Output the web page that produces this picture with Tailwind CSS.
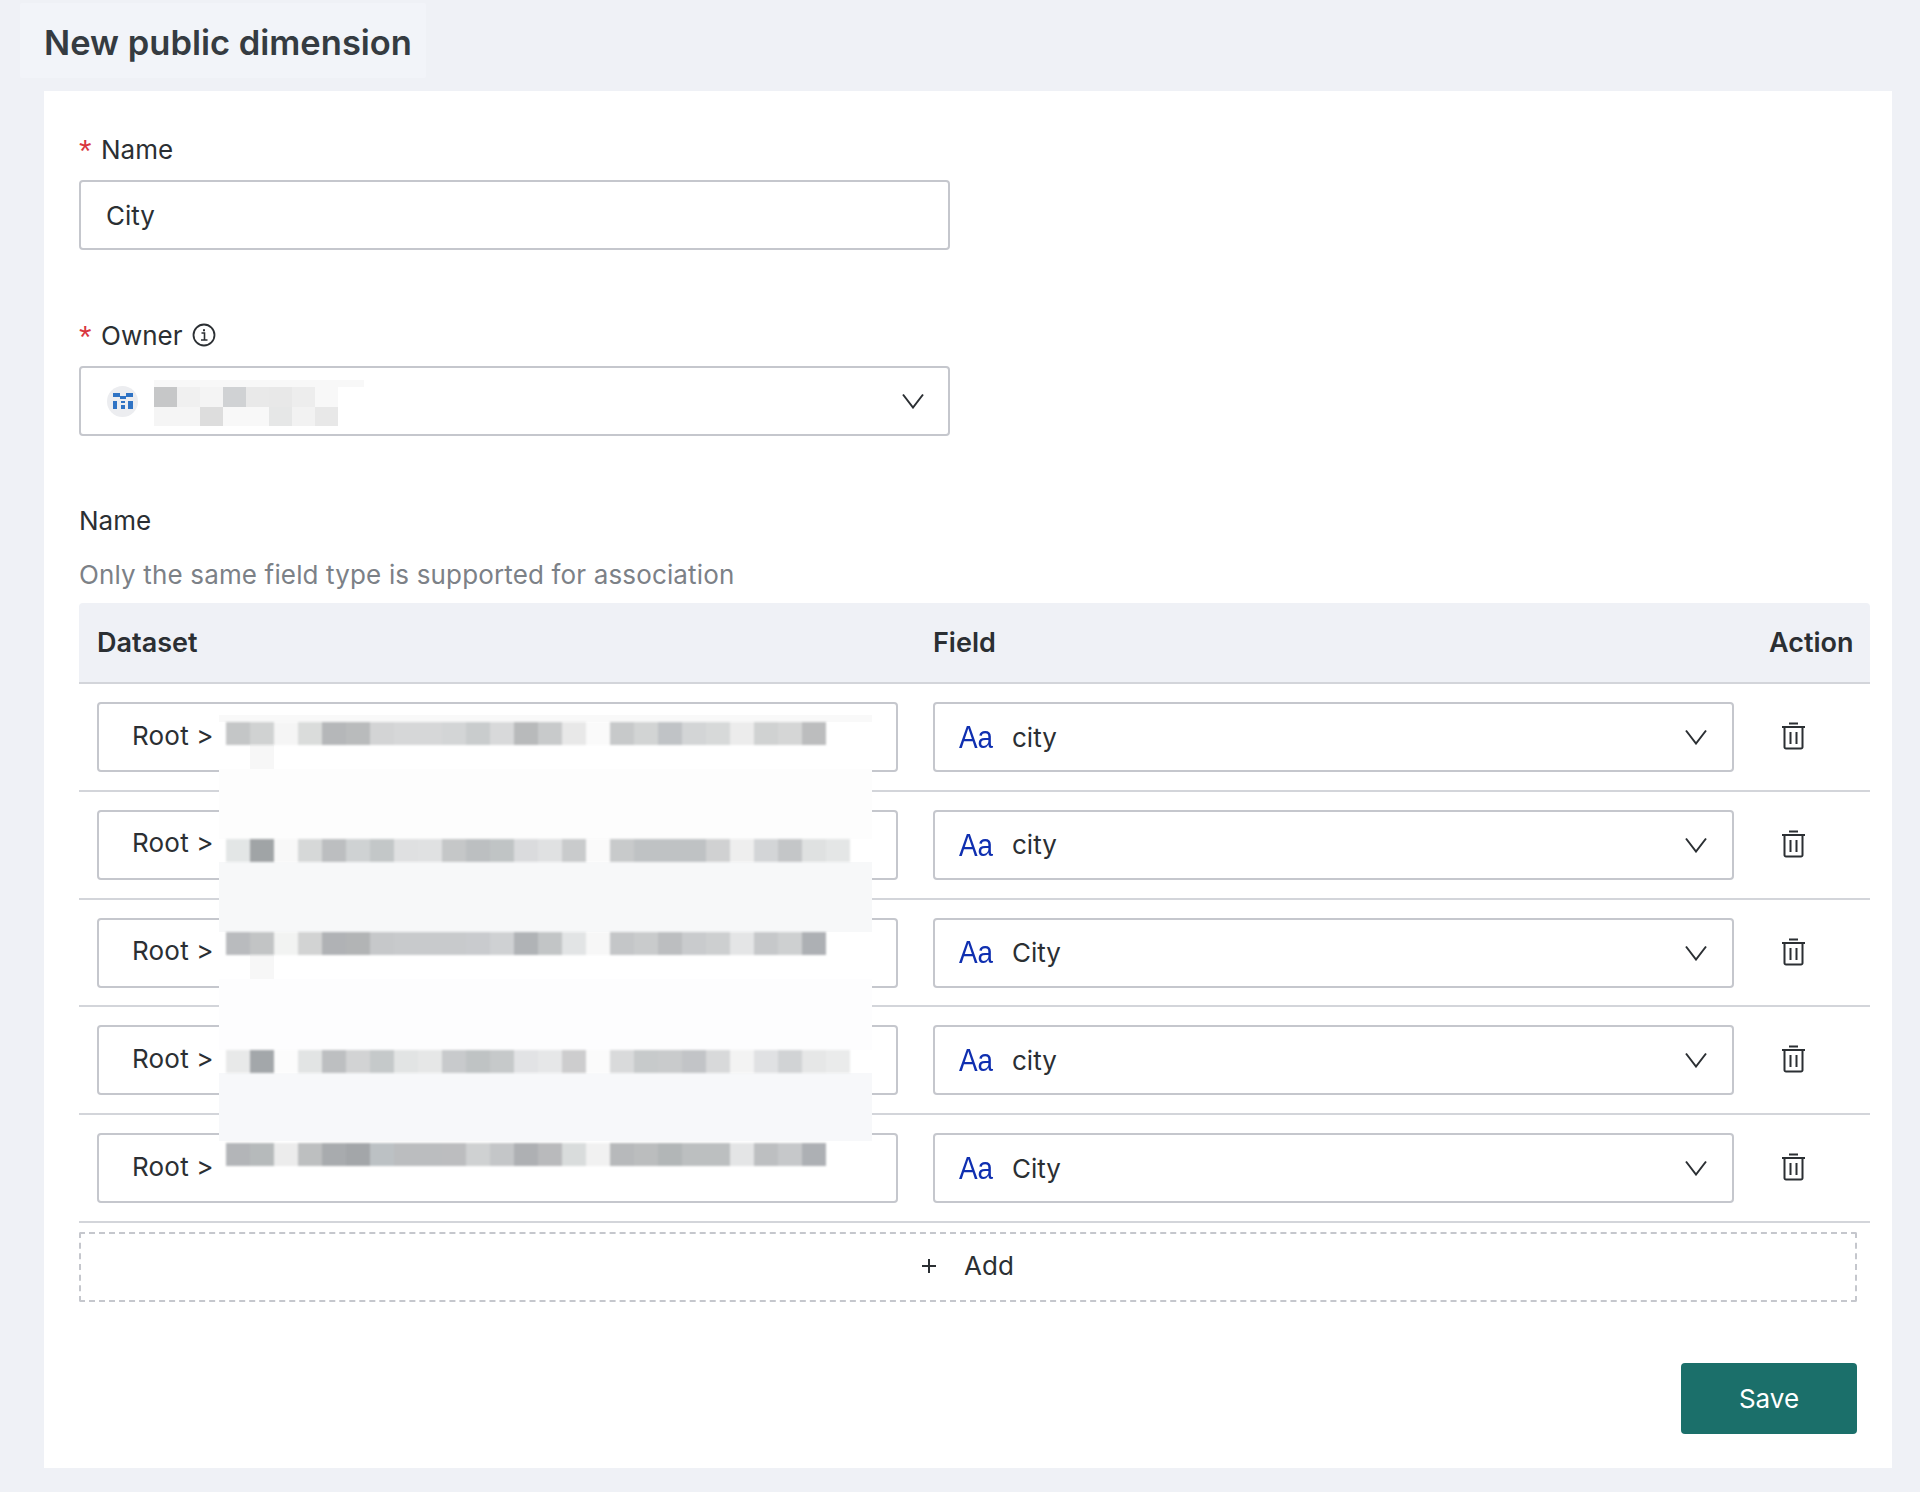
<!DOCTYPE html>
<html lang="en">
<head>
<meta charset="utf-8">
<title>New public dimension</title>
<script src="https://cdn.jsdelivr.net/npm/@tailwindcss/browser@4"></script>
</head>
<body class="m-0 bg-[#eff1f6] font-['Inter',sans-serif] text-[#2b2f33]">
<div class="w-[1920px] h-[1492px] overflow-hidden pt-[3px]">
  <div class="ml-[20px] w-[406px] h-[75px] bg-[#f2f4f9] pl-[24px] pt-[4px] flex items-center text-[34.500px] font-semibold text-[#353b41] rounded-[2px]">New public dimension</div>
  <div class="ml-[44px] mt-[13px] w-[1848px] h-[1377px] bg-white pl-[35px] pt-[40px]">

    <div class="h-[36px] flex items-center text-[26px]"><span class="w-[22px] h-[36px] text-[#d9363e] text-[32px] leading-[40px] font-['Liberation_Sans',sans-serif]">*</span>Name</div>
    <div class="mt-[13px] w-[871px] h-[70px] border-2 border-[#c5c7cd] rounded-[4px] flex items-center pl-[25px] text-[26px]">City</div>

    <div class="mt-[67px] h-[36px] flex items-center text-[26px]"><span class="w-[22px] h-[36px] text-[#d9363e] text-[32px] leading-[40px] font-['Liberation_Sans',sans-serif]">*</span>Owner
      <svg class="ml-[10px]" width="24" height="24" viewBox="0 0 24 24" fill="none" stroke="#2b2f33" stroke-width="1.8"><circle cx="12" cy="12" r="10.500"/><path d="M9.500 10h3v7M9 17h6.500" stroke-width="1.600"/><path d="M12 6.200v2" stroke-width="2"/></svg>
    </div>
    <div class="relative mt-[13px] w-[871px] h-[70px] border-2 border-[#c5c7cd] rounded-[4px] flex items-center justify-between pl-[26px] pr-[23px]">
      <div class="w-[31px] h-[31px] rounded-full bg-[#ecedf0] flex items-center justify-center">
        <svg width="20" height="16" viewBox="0 0 20 16" fill="#2f73c4"><path d="M0 0h7v4H0zM13 0h7v4h-7zM7 3h6v3H7zM0 8h4v8H0zM8 12h4v4H8zM15 8h5v8h-5zM8 8h4v2H8z"/></svg>
      </div>
      <svg width="24" height="16" viewBox="0 0 24 16" fill="none" stroke="#2b2f33" stroke-width="2"><path d="M2 1.500l10 13 10-13"/></svg>
      <div class="absolute left-[73px] top-[12px] w-[210px] flex flex-col">
        <div class="h-[7px] w-[210px] bg-[#f8f8f8]"></div>
        <div class="flex h-[20px] blur-[0.5px]"><div class="w-[23px] bg-[#c6c7c8]"></div><div class="w-[23px] bg-[#f0f0f0]"></div><div class="w-[23px] bg-[#f4f4f4]"></div><div class="w-[23px] bg-[#d0d2d4]"></div><div class="w-[23px] bg-[#e9e9e9]"></div><div class="w-[23px] bg-[#e8e8e8]"></div><div class="w-[23px] bg-[#ededed]"></div><div class="w-[23px] bg-[#f8f8f8]"></div></div>
        <div class="flex h-[19px] blur-[0.5px]"><div class="w-[23px] bg-[#f5f5f5]"></div><div class="w-[23px] bg-[#f5f5f5]"></div><div class="w-[23px] bg-[#dddddd]"></div><div class="w-[23px] bg-[#f8f8f8]"></div><div class="w-[23px] bg-[#f8f8f8]"></div><div class="w-[23px] bg-[#e6e7e7]"></div><div class="w-[23px] bg-[#f2f2f2]"></div><div class="w-[23px] bg-[#e8e8e8]"></div></div>
      </div>
    </div>

    <div class="mt-[66px] h-[36px] flex items-center text-[26px]">Name</div>
    <div class="mt-[18px] h-[36px] flex items-center text-[26px] tracking-[0.15px] text-[#7c8187]">Only the same field type is supported for association</div>

    <div class="relative mt-[11px] w-[1791px]">
      <div class="h-[81px] bg-[#eff1f6] border-b-2 border-[#d3d5da] rounded-t-[4px] flex items-center text-[27px] font-semibold pt-[2px]">
        <span class="ml-[18px] w-[836px]">Dataset</span><span class="w-[836px]">Field</span><span>Action</span>
      </div>

      <div class="h-[107.75px] border-b-2 border-[#d3d5da] pt-[18px] pl-[18px] flex">
        <div class="w-[801px] h-[70px] border-2 border-[#c5c7cd] rounded-[4px] pl-[33px] text-[26px] tracking-[0.2px] flex items-center pb-[4px]">Root &gt;</div>
        <div class="ml-[35px] w-[801px] h-[70px] border-2 border-[#c5c7cd] rounded-[4px] pl-[24px] pr-[24px] flex items-center text-[26px]">
          <span class="w-[53px]"><span class="inline-block scale-x-90 origin-left pt-[2px] text-[31px] text-[#0f2fb0] font-['Liberation_Sans',sans-serif]">Aa</span></span><span class="flex-1">city</span>
          <svg width="24" height="16" viewBox="0 0 24 16" fill="none" stroke="#2b2f33" stroke-width="2"><path d="M2 1.500l10 13 10-13"/></svg>
        </div>
        <svg class="ml-[47px] mt-[20px]" width="25" height="28" viewBox="0 0 25 28" fill="none" stroke="#2b2f33" stroke-width="2"><path d="M8 1.500h9M1 5h23M3.500 5v20a1.500 1.500 0 0 0 1.500 1.500h15a1.500 1.500 0 0 0 1.500-1.500V5M9.500 10v12M15.500 10v12"/></svg>
      </div>
      <div class="h-[107.75px] border-b-2 border-[#d3d5da] pt-[18px] pl-[18px] flex">
        <div class="w-[801px] h-[70px] border-2 border-[#c5c7cd] rounded-[4px] pl-[33px] text-[26px] tracking-[0.2px] flex items-center pb-[4px]">Root &gt;</div>
        <div class="ml-[35px] w-[801px] h-[70px] border-2 border-[#c5c7cd] rounded-[4px] pl-[24px] pr-[24px] flex items-center text-[26px]">
          <span class="w-[53px]"><span class="inline-block scale-x-90 origin-left pt-[2px] text-[31px] text-[#0f2fb0] font-['Liberation_Sans',sans-serif]">Aa</span></span><span class="flex-1">city</span>
          <svg width="24" height="16" viewBox="0 0 24 16" fill="none" stroke="#2b2f33" stroke-width="2"><path d="M2 1.500l10 13 10-13"/></svg>
        </div>
        <svg class="ml-[47px] mt-[20px]" width="25" height="28" viewBox="0 0 25 28" fill="none" stroke="#2b2f33" stroke-width="2"><path d="M8 1.500h9M1 5h23M3.500 5v20a1.500 1.500 0 0 0 1.500 1.500h15a1.500 1.500 0 0 0 1.500-1.500V5M9.500 10v12M15.500 10v12"/></svg>
      </div>
      <div class="h-[107.75px] border-b-2 border-[#d3d5da] pt-[18px] pl-[18px] flex">
        <div class="w-[801px] h-[70px] border-2 border-[#c5c7cd] rounded-[4px] pl-[33px] text-[26px] tracking-[0.2px] flex items-center pb-[4px]">Root &gt;</div>
        <div class="ml-[35px] w-[801px] h-[70px] border-2 border-[#c5c7cd] rounded-[4px] pl-[24px] pr-[24px] flex items-center text-[26px]">
          <span class="w-[53px]"><span class="inline-block scale-x-90 origin-left pt-[2px] text-[31px] text-[#0f2fb0] font-['Liberation_Sans',sans-serif]">Aa</span></span><span class="flex-1">City</span>
          <svg width="24" height="16" viewBox="0 0 24 16" fill="none" stroke="#2b2f33" stroke-width="2"><path d="M2 1.500l10 13 10-13"/></svg>
        </div>
        <svg class="ml-[47px] mt-[20px]" width="25" height="28" viewBox="0 0 25 28" fill="none" stroke="#2b2f33" stroke-width="2"><path d="M8 1.500h9M1 5h23M3.500 5v20a1.500 1.500 0 0 0 1.500 1.500h15a1.500 1.500 0 0 0 1.500-1.500V5M9.500 10v12M15.500 10v12"/></svg>
      </div>
      <div class="h-[107.75px] border-b-2 border-[#d3d5da] pt-[18px] pl-[18px] flex">
        <div class="w-[801px] h-[70px] border-2 border-[#c5c7cd] rounded-[4px] pl-[33px] text-[26px] tracking-[0.2px] flex items-center pb-[4px]">Root &gt;</div>
        <div class="ml-[35px] w-[801px] h-[70px] border-2 border-[#c5c7cd] rounded-[4px] pl-[24px] pr-[24px] flex items-center text-[26px]">
          <span class="w-[53px]"><span class="inline-block scale-x-90 origin-left pt-[2px] text-[31px] text-[#0f2fb0] font-['Liberation_Sans',sans-serif]">Aa</span></span><span class="flex-1">city</span>
          <svg width="24" height="16" viewBox="0 0 24 16" fill="none" stroke="#2b2f33" stroke-width="2"><path d="M2 1.500l10 13 10-13"/></svg>
        </div>
        <svg class="ml-[47px] mt-[20px]" width="25" height="28" viewBox="0 0 25 28" fill="none" stroke="#2b2f33" stroke-width="2"><path d="M8 1.500h9M1 5h23M3.500 5v20a1.500 1.500 0 0 0 1.500 1.500h15a1.500 1.500 0 0 0 1.500-1.500V5M9.500 10v12M15.500 10v12"/></svg>
      </div>
      <div class="h-[107.75px] border-b-2 border-[#d3d5da] pt-[18px] pl-[18px] flex">
        <div class="w-[801px] h-[70px] border-2 border-[#c5c7cd] rounded-[4px] pl-[33px] text-[26px] tracking-[0.2px] flex items-center pb-[4px]">Root &gt;</div>
        <div class="ml-[35px] w-[801px] h-[70px] border-2 border-[#c5c7cd] rounded-[4px] pl-[24px] pr-[24px] flex items-center text-[26px]">
          <span class="w-[53px]"><span class="inline-block scale-x-90 origin-left pt-[2px] text-[31px] text-[#0f2fb0] font-['Liberation_Sans',sans-serif]">Aa</span></span><span class="flex-1">City</span>
          <svg width="24" height="16" viewBox="0 0 24 16" fill="none" stroke="#2b2f33" stroke-width="2"><path d="M2 1.500l10 13 10-13"/></svg>
        </div>
        <svg class="ml-[47px] mt-[20px]" width="25" height="28" viewBox="0 0 25 28" fill="none" stroke="#2b2f33" stroke-width="2"><path d="M8 1.500h9M1 5h23M3.500 5v20a1.500 1.500 0 0 0 1.500 1.500h15a1.500 1.500 0 0 0 1.500-1.500V5M9.500 10v12M15.500 10v12"/></svg>
      </div>

      <!-- obscured dataset paths -->
      <div class="absolute left-[140px] top-[112px] w-[653px] flex flex-col">
        <div class="h-[7px] bg-[#f9f9f9]"></div>
        <div class="bg-white"><div class="flex h-[23px] pl-[7px] blur-[1px]"><div class="w-6 bg-[#c4c6c7]"></div><div class="w-6 bg-[#d0d2d2]"></div><div class="w-6 bg-[#f5f5f5]"></div><div class="w-6 bg-[#dadcdb]"></div><div class="w-6 bg-[#b5b7b9]"></div><div class="w-6 bg-[#b9bbbc]"></div><div class="w-6 bg-[#d3d4d5]"></div><div class="w-6 bg-[#d6d7d8]"></div><div class="w-6 bg-[#d6d7d8]"></div><div class="w-6 bg-[#d3d5d6]"></div><div class="w-6 bg-[#c9cccd]"></div><div class="w-6 bg-[#d8d9da]"></div><div class="w-6 bg-[#b8babb]"></div><div class="w-6 bg-[#c8cacb]"></div><div class="w-6 bg-[#e8e8e8]"></div><div class="w-6 bg-[#fafafa]"></div><div class="w-6 bg-[#c7c9ca]"></div><div class="w-6 bg-[#d2d4d4]"></div><div class="w-6 bg-[#c0c3c6]"></div><div class="w-6 bg-[#d3d5d6]"></div><div class="w-6 bg-[#d7d9d9]"></div><div class="w-6 bg-[#ececec]"></div><div class="w-6 bg-[#d0d2d2]"></div><div class="w-6 bg-[#d5d6d6]"></div><div class="w-6 bg-[#bcbdbe]"></div></div></div>
        <div class="flex h-[24px] bg-white pl-[31px]"><div class="w-6 bg-[#f7f7f7]"></div></div>
        <div class="h-[70px] bg-[#fdfdfd]"></div>
        <div class="bg-white"><div class="flex h-[23px] pl-[7px] blur-[1px]"><div class="w-6 bg-[#e3e6e6]"></div><div class="w-6 bg-[#a0a4a6]"></div><div class="w-6 bg-[#f8f8f8]"></div><div class="w-6 bg-[#d6d8d8]"></div><div class="w-6 bg-[#bcbec0]"></div><div class="w-6 bg-[#cfd2d3]"></div><div class="w-6 bg-[#c3c7c8]"></div><div class="w-6 bg-[#dfe0e1]"></div><div class="w-6 bg-[#e0e1e2]"></div><div class="w-6 bg-[#c5c7c8]"></div><div class="w-6 bg-[#bcbfc1]"></div><div class="w-6 bg-[#c0c4c5]"></div><div class="w-6 bg-[#dadbdd]"></div><div class="w-6 bg-[#e0e1e2]"></div><div class="w-6 bg-[#c9cbcc]"></div><div class="w-6 bg-[#fafafa]"></div><div class="w-6 bg-[#c8cacb]"></div><div class="w-6 bg-[#bfc2c4]"></div><div class="w-6 bg-[#bfc2c4]"></div><div class="w-6 bg-[#bfc2c4]"></div><div class="w-6 bg-[#d0d1d2]"></div><div class="w-6 bg-[#eeeeee]"></div><div class="w-6 bg-[#d3d5d7]"></div><div class="w-6 bg-[#c4c6c8]"></div><div class="w-6 bg-[#dfe1e1]"></div><div class="w-6 bg-[#e4e6e6]"></div></div></div>
        <div class="h-[70px] bg-[#f7f8f9]"></div>
        <div class="bg-white"><div class="flex h-[23px] pl-[7px] blur-[1px]"><div class="w-6 bg-[#b9bbbe]"></div><div class="w-6 bg-[#c2c4c5]"></div><div class="w-6 bg-[#f2f3f2]"></div><div class="w-6 bg-[#d2d3d3]"></div><div class="w-6 bg-[#b0b2b5]"></div><div class="w-6 bg-[#b2b4b5]"></div><div class="w-6 bg-[#c6c8ca]"></div><div class="w-6 bg-[#c8cacc]"></div><div class="w-6 bg-[#c8cacc]"></div><div class="w-6 bg-[#c8cacc]"></div><div class="w-6 bg-[#c9cbce]"></div><div class="w-6 bg-[#cfd1d3]"></div><div class="w-6 bg-[#b0b3b6]"></div><div class="w-6 bg-[#c2c5c6]"></div><div class="w-6 bg-[#e2e4e5]"></div><div class="w-6 bg-[#f7f7f7]"></div><div class="w-6 bg-[#c4c6c8]"></div><div class="w-6 bg-[#c9cbcc]"></div><div class="w-6 bg-[#bcbec0]"></div><div class="w-6 bg-[#c9cbcd]"></div><div class="w-6 bg-[#cdcfd0]"></div><div class="w-6 bg-[#e4e5e6]"></div><div class="w-6 bg-[#c6c8ca]"></div><div class="w-6 bg-[#ced0d1]"></div><div class="w-6 bg-[#adb0b4]"></div></div></div>
        <div class="flex h-[24px] bg-white pl-[31px]"><div class="w-6 bg-[#f7f7f7]"></div></div>
        <div class="h-[71px] bg-[#fdfdfe]"></div>
        <div class="bg-white"><div class="flex h-[23px] pl-[7px] blur-[1px]"><div class="w-6 bg-[#e8e9e9]"></div><div class="w-6 bg-[#a3a7aa]"></div><div class="w-6 bg-[#fcfcfc]"></div><div class="w-6 bg-[#e2e4e4]"></div><div class="w-6 bg-[#bdbfc1]"></div><div class="w-6 bg-[#d2d3d4]"></div><div class="w-6 bg-[#c5c9ca]"></div><div class="w-6 bg-[#e2e4e4]"></div><div class="w-6 bg-[#e6e7e7]"></div><div class="w-6 bg-[#c8cacc]"></div><div class="w-6 bg-[#bfc3c4]"></div><div class="w-6 bg-[#c6c9ca]"></div><div class="w-6 bg-[#e2e3e5]"></div><div class="w-6 bg-[#e6e7e8]"></div><div class="w-6 bg-[#cdcdce]"></div><div class="w-6 bg-[#fbfbfb]"></div><div class="w-6 bg-[#d9dadb]"></div><div class="w-6 bg-[#c7cacb]"></div><div class="w-6 bg-[#c9cbcc]"></div><div class="w-6 bg-[#c2c4c7]"></div><div class="w-6 bg-[#d8d9da]"></div><div class="w-6 bg-[#f3f3f3]"></div><div class="w-6 bg-[#e0e1e3]"></div><div class="w-6 bg-[#d1d3d5]"></div><div class="w-6 bg-[#e6e7e7]"></div><div class="w-6 bg-[#eaebeb]"></div></div></div>
        <div class="h-[68px] bg-[#f7f8fa]"></div>
        <div class="h-[2px] bg-white"></div>
        <div class="flex h-[23px] pl-[7px] blur-[1px]"><div class="w-6 bg-[#b3b5b8]"></div><div class="w-6 bg-[#b6babb]"></div><div class="w-6 bg-[#ececec]"></div><div class="w-6 bg-[#bdbfc0]"></div><div class="w-6 bg-[#a8abae]"></div><div class="w-6 bg-[#a3a6a9]"></div><div class="w-6 bg-[#bcc1c4]"></div><div class="w-6 bg-[#bbbdbf]"></div><div class="w-6 bg-[#bbbdbf]"></div><div class="w-6 bg-[#bcbdbf]"></div><div class="w-6 bg-[#cfd1d2]"></div><div class="w-6 bg-[#c4c6c8]"></div><div class="w-6 bg-[#aeb0b3]"></div><div class="w-6 bg-[#b9babc]"></div><div class="w-6 bg-[#d9dcdc]"></div><div class="w-6 bg-[#f1f1f1]"></div><div class="w-6 bg-[#b7b9bb]"></div><div class="w-6 bg-[#bbbdbe]"></div><div class="w-6 bg-[#b2b6b7]"></div><div class="w-6 bg-[#bcbfc0]"></div><div class="w-6 bg-[#bcbfc0]"></div><div class="w-6 bg-[#e4e5e6]"></div><div class="w-6 bg-[#bdbfc1]"></div><div class="w-6 bg-[#c6c8ca]"></div><div class="w-6 bg-[#adb0b4]"></div></div>
      </div>
    </div>

    <div class="mt-[9px] w-[1778px] h-[70px] border-2 border-dashed border-[#c5c7cd] rounded-[2px] flex items-center justify-center text-[26px] pb-[2px]">
      <span class="ml-[-1px] mr-[15px]">
        <svg width="16" height="16" viewBox="0 0 16 16" fill="none" stroke="#2b2f33" stroke-width="2"><path d="M8 1v14M1 8h14"/></svg>
      </span>
      <span class="ml-[12px]">Add</span>
    </div>

    <div class="mt-[61px] w-[1778px] flex justify-end">
      <div class="w-[176px] h-[71px] bg-[#1b6f6a] rounded-[4px] flex items-center justify-center text-[26px] text-white">Save</div>
    </div>
  </div>
</div>
</body>
</html>
